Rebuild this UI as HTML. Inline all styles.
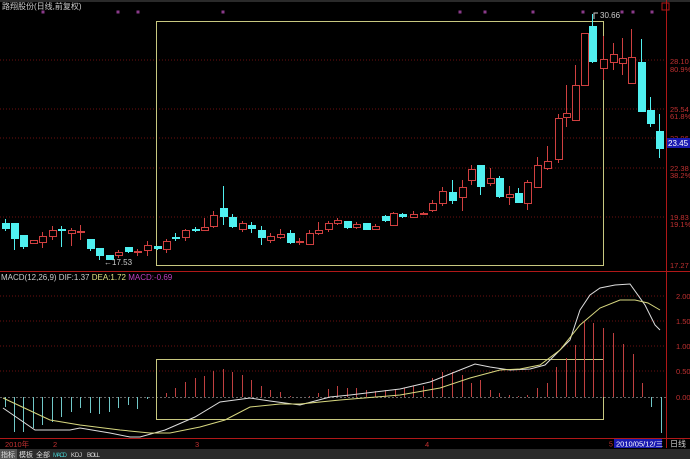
<!DOCTYPE html>
<html><head><meta charset="utf-8"><style>
html,body{margin:0;padding:0;background:#000;width:690px;height:459px;overflow:hidden}
svg{display:block}
text{font-family:"Liberation Sans","Noto Sans CJK SC",sans-serif}
</style></head><body>
<svg id="s" width="690" height="459" xmlns="http://www.w3.org/2000/svg">
<rect width="690" height="459" fill="#000"/>
<line x1="0" y1="1" x2="690" y2="1" stroke="#555"/>
<g stroke="#6b1010" stroke-dasharray="1,2">
<line x1="0" y1="60" x2="666" y2="60"/><line x1="0" y1="109" x2="666" y2="109"/><line x1="0" y1="138" x2="666" y2="138"/>
<line x1="0" y1="168" x2="666" y2="168"/><line x1="0" y1="217" x2="666" y2="217"/>
<line x1="0" y1="296" x2="666" y2="296"/><line x1="0" y1="321" x2="666" y2="321"/><line x1="0" y1="346" x2="666" y2="346"/><line x1="0" y1="371" x2="666" y2="371"/>
</g>
<line x1="0" y1="397.5" x2="666" y2="397.5" stroke="#666" stroke-dasharray="2,2"/>
<line x1="666.5" y1="0" x2="666.5" y2="448" stroke="#b01818"/>
<line x1="0" y1="271.5" x2="690" y2="271.5" stroke="#b01818"/>
<line x1="0" y1="438.5" x2="690" y2="438.5" stroke="#b01818"/>
<rect x="662" y="3" width="7" height="7" fill="none" stroke="#b01818"/>
<g fill="#c03030" font-size="7.5">
<text x="670" y="64">28.10</text><text x="670" y="72">80.9%</text>
<text x="670" y="112">25.54</text><text x="670" y="119">61.8%</text>
<text x="670" y="141">23.96</text>
<text x="670" y="171">22.38</text><text x="670" y="178">38.2%</text>
<text x="670" y="220">19.83</text><text x="670" y="227">19.1%</text>
<text x="670" y="268">17.27</text>
<text x="676" y="299">2.00</text><text x="676" y="324">1.50</text><text x="676" y="349">1.00</text><text x="676" y="374">0.50</text><text x="676" y="400">0.00</text>
<text x="5" y="447">2010年</text><text x="53" y="447">2</text><text x="195" y="447">3</text><text x="425" y="447">4</text>
</g>
<rect x="667" y="138" width="23" height="10" fill="#1a1ab0"/>
<text x="668" y="146" font-size="8" fill="#fff">23.45</text>
<text x="2" y="9" font-size="8" fill="#ccc">路翔股份(日线,前复权)</text>
<text x="1" y="280" font-size="8" fill="#ccc">MACD(12,26,9) <tspan>DIF:1.37</tspan> <tspan fill="#e0e080">DEA:1.72</tspan> <tspan fill="#c040c0">MACD:-0.69</tspan></text>
<rect x="156.5" y="21.5" width="447" height="244" fill="none" stroke="#c8c880"/>
<rect x="156.5" y="359.5" width="447" height="60" fill="none" stroke="#c8c880"/>
<g id="c"></g>
<text x="600" y="18" font-size="8" fill="#ccc">30.66</text>
<path d="M594 19 L594 13 L598 13" stroke="#ccc" fill="none"/>
<text x="104" y="265" font-size="8" fill="#ccc">←17.53</text>
<rect x="614" y="439" width="48" height="9" fill="#1a1ab0"/>
<text x="609" y="446.5" font-size="7" fill="#c03030">5</text>
<text x="616" y="446.5" font-size="7.5" fill="#fff">2010/05/12/三</text>
<text x="670" y="446.5" font-size="8" fill="#ccc">日线</text>
<rect x="0" y="449" width="690" height="10" fill="#2a2a2a"/>
<rect x="0" y="449" width="17" height="10" fill="#555"/>
<g font-size="7" fill="#ddd"><text x="1" y="457">指标</text><text x="19" y="457">模板</text><text x="36" y="457">全部</text>
<text x="53" y="457" fill="#4cc" font-size="6" textLength="14">MACD</text><text x="71" y="457" font-size="6" textLength="11">KDJ</text><text x="87" y="457" font-size="6" textLength="13">BOLL</text></g>
</svg>
<script>
var d=[[5,223,228,219,231,0],[14,223,238,223,250,0],[23,235,246,235,249,0],[33,240,243,240,244,1],[42,236,242,232,248,1],[52,230,236,226,240,1],[61,229,230,226,247,0],[71,230,233,228,246,1],[80,231,232,225,240,1],[90,239,248,239,251,0],[99,248,255,248,260,0],[109,255,259,255,260,0],[118,252,255,250,258,1],[128,247,251,247,253,0],[137,251,252,249,256,1],[147,245,250,241,256,1],[157,246,248,246,250,0],[166,241,249,239,253,1],[175,237,238,233,241,0],[185,230,237,229,241,1],[195,229,230,227,232,0],[204,227,230,218,231,1],[213,215,226,211,228,1],[223,208,216,186,225,0],[232,217,226,214,228,0],[242,223,229,221,232,1],[251,225,228,222,233,0],[261,230,237,226,245,0],[270,236,240,233,243,1],[280,234,237,229,239,1],[290,233,242,230,244,0],[299,241,242,238,245,1],[309,233,244,230,245,1],[318,230,233,222,235,1],[328,223,229,221,232,1],[337,220,223,218,225,1],[347,221,227,221,229,0],[356,224,227,222,229,1],[366,223,229,223,230,0],[375,226,229,224,230,1],[385,216,220,215,222,0],[393,213,225,212,226,1],[402,214,216,213,218,0],[413,214,217,211,218,1],[423,213,214,212,215,1],[432,203,210,200,212,1],[442,191,203,187,206,1],[452,192,200,180,204,0],[462,187,197,180,211,1],[471,169,180,165,185,1],[480,165,186,165,195,0],[490,178,183,168,186,1],[499,178,196,176,198,0],[509,194,197,186,205,1],[518,193,202,188,203,0],[527,182,203,180,210,1],[537,165,187,157,188,1],[547,161,168,146,170,1],[558,118,159,114,163,1],[566,113,117,85,127,1],[575,85,120,65,121,1],[584,33,85,33,86,1],[592,26,61,14,63,0],[603,59,68,36,80,1],[613,54,62,43,70,1],[622,58,63,38,75,1],[631,57,83,29,83,1],[641,62,111,39,111,0],[650,110,123,97,127,0],[659,131,148,114,158,0]];
var h='';
d.forEach(function(c){var col=c[5]?'#d04040':'#50f0f0';var x=c[0];
h+='<line x1="'+(x+.5)+'" y1="'+c[3]+'" x2="'+(x+.5)+'" y2="'+c[4]+'" stroke="'+col+'"/>';
var hh=Math.max(1,c[2]-c[1]);
if(c[5]) h+='<rect x="'+(x-3+.5)+'" y="'+(c[1]+.5)+'" width="7" height="'+hh+'" fill="#000" stroke="'+col+'"/>';
else h+='<rect x="'+(x-3)+'" y="'+c[1]+'" width="8" height="'+(hh+1)+'" fill="'+col+'"/>';});
var m=[[5,407],[14,432],[23,432],[33,428],[42,425],[52,422],[61,417],[71,412],[80,408],[90,413],[99,414],[109,412],[118,408],[128,405],[137,409],[147,399],[166,393],[175,388],[185,382],[195,378],[204,376],[213,371],[223,369],[232,372],[242,375],[251,380],[261,386],[270,390],[280,392],[290,396],[299,397],[309,396],[318,393],[328,389],[337,386],[347,388],[356,388],[366,390],[375,391],[385,390],[395,389],[404,388],[413,386],[423,386],[432,378],[442,372],[452,372],[462,375],[471,383],[480,380],[490,390],[499,393],[509,395],[518,396],[527,395],[537,388],[547,383],[556,367],[566,358],[575,345],[584,322],[593,323],[603,328],[613,333],[623,344],[633,354],[642,383],[651,407],[661,433]];
m.forEach(function(b){var col=b[1]<397?'#c04040':'#70c8c8';h+='<line x1="'+(b[0]+.5)+'" y1="397" x2="'+(b[0]+.5)+'" y2="'+b[1]+'" stroke="'+col+'"/>';});
h+='<polyline fill="none" stroke="#ddd" points="3,408 35,430 70,430 80,428 110,433 130,437 140,437 165,430 195,417 220,402 250,398 270,401 300,405 330,397 350,395 400,389 430,382 460,370 475,364 490,367 510,370 530,369 545,365 560,350 570,340 580,310 590,295 600,288 615,285 630,284 645,305 655,325 660,330"/>';
h+='<polyline fill="none" stroke="#d8d880" points="3,398 50,420 80,425 120,430 150,433 170,433 200,427 225,420 250,407 280,404 300,404 340,400 400,395 440,388 470,378 500,370 520,369 540,365 560,350 580,325 600,308 620,300 635,300 648,303 660,310"/>';
[43,118,138,223,460,485,533,583,622,633,652].forEach(function(x){h+='<rect x="'+(x-1.5)+'" y="10.5" width="3" height="3" fill="#8a3a8a"/>';});
document.getElementById('c').innerHTML=h;
</script>
</body></html>
